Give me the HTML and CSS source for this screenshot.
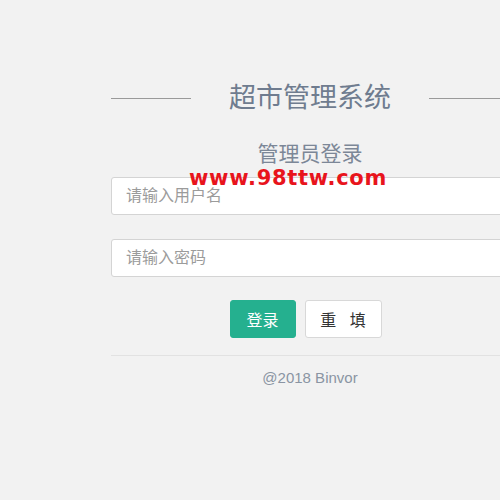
FILE: index.html
```html
<!DOCTYPE html>
<html>
<head>
<meta charset="utf-8">
<link rel="stylesheet" href="styles.css">
</head>
<body>
<div class="page">
  <div class="box">
    <div class="title-row">
      <span class="line"></span>
      <h1 class="title">超市管理系统</h1>
      <span class="line"></span>
    </div>
    <h2 class="subtitle">管理员登录</h2>
    <div class="field field-user">
      <input class="input" type="text" placeholder="请输入用户名">
      <span class="watermark">www.98ttw.com</span>
    </div>
    <div class="field">
      <input class="input" type="password" placeholder="请输入密码">
    </div>
    <div class="buttons">
      <button class="btn btn-primary">登录</button>
      <button class="btn btn-default">重&nbsp;&nbsp;&nbsp;填</button>
    </div>
    <div class="sep"></div>
    <p class="footer">@2018 Binvor</p>
  </div>
</div>
</body>
</html>
```
FILE: styles.css
```css
html, body {
  margin: 0;
  padding: 0;
  background: #f2f2f2;
  width: 500px;
  height: 500px;
  overflow: hidden;
  font-family: "Liberation Sans", "Noto Sans CJK SC", sans-serif;
}
.page {
  padding-top: 78px;
  padding-left: 111px;
}
.box {
  width: 398px;
}
.title-row {
  display: flex;
  align-items: center;
  gap: 38px;
  height: 40px;
}
.line {
  flex: 1;
  height: 1px;
  background: #9a9a9a;
}
.title {
  margin: 0;
  font-size: 27px;
  font-weight: normal;
  color: #6f7c8f;
  line-height: 40px;
}
.subtitle {
  margin: 20px 0 0;
  text-align: center;
  font-size: 21px;
  font-weight: normal;
  color: #7c8797;
  line-height: 32px;
  height: 27px;
}
.field {
  position: relative;
  margin-top: 12px;
}
.field + .field {
  margin-top: 24px;
}
.input {
  display: block;
  box-sizing: border-box;
  width: 100%;
  height: 38px;
  border: 1px solid #d4d4d4;
  border-radius: 3px;
  background: #fff;
  padding: 0 14px;
  font-size: 16px;
  font-family: inherit;
  color: #333;
  outline: none;
}
.input::placeholder {
  color: #9b9b9b;
}
.watermark {
  position: absolute;
  left: 78px;
  top: -11px;
  font-family: "DejaVu Sans", sans-serif;
  font-weight: bold;
  font-size: 21px;
  color: #e8141c;
  letter-spacing: 0.7px;
  pointer-events: none;
}
.buttons {
  display: flex;
  justify-content: center;
  gap: 9px;
  margin-top: 23px;
  padding-right: 9px;
}
.btn {
  height: 38px;
  border-radius: 3px;
  font-size: 16px;
  font-family: inherit;
  padding: 0;
}
.btn-primary {
  width: 66px;
  background: #25b08f;
  border: 1px solid #25b08f;
  color: #fff;
}
.btn-default {
  width: 77px;
  background: #fff;
  border: 1px solid #d8d8d8;
  color: #333;
}
.sep {
  margin-top: 17px;
  height: 1px;
  background: #e2e2e2;
}
.footer {
  margin: 13px 0 0;
  text-align: center;
  font-size: 15px;
  color: #8a95a3;
}
```
